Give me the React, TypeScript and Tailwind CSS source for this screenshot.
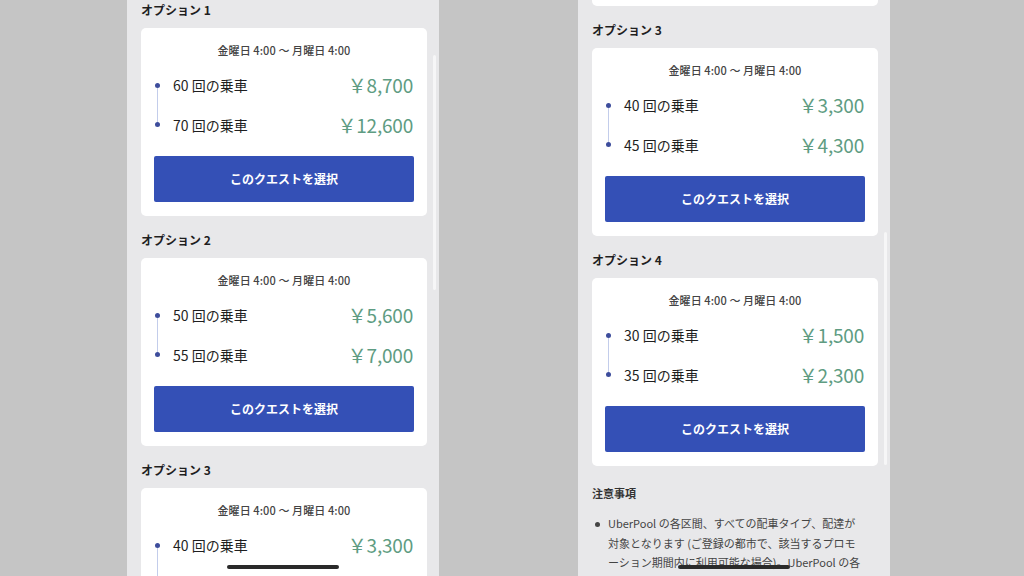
import React from 'react';

type Tier = { rides: number; price: string };
type Option = { label: string; tiers: Tier[] };

const leftOptions: Option[] = [
    { label: 'オプション 1', tiers: [{ rides: 60, price: '8,700' }, { rides: 70, price: '12,600' }] },
    { label: 'オプション 2', tiers: [{ rides: 50, price: '5,600' }, { rides: 55, price: '7,000' }] },
    { label: 'オプション 3', tiers: [{ rides: 40, price: '3,300' }, { rides: 45, price: '4,300' }] },
];

const rightOptions: Option[] = [
    { label: 'オプション 3', tiers: [{ rides: 40, price: '3,300' }, { rides: 45, price: '4,300' }] },
    { label: 'オプション 4', tiers: [{ rides: 30, price: '1,500' }, { rides: 35, price: '2,300' }] },
];

function QuestCard({ option }: { option: Option }) {
    return (
        <div className="pt-[14px]">
            <h3 className="h-[20px] leading-[20px] text-[12px] font-bold text-[#1f1f1f]">{option.label}</h3>
            <div className="mt-[8px] h-[188px] bg-white rounded-[5px] px-[13px] pt-[14px]">
                <p className="h-[16px] leading-[16px] text-center text-[11px] font-medium text-[#444] tracking-[0.1px]">金曜日 4:00 〜 月曜日 4:00</p>
                <div className="mt-[7px] flex">
                    <div className="w-[6px] h-[80px] flex flex-col items-center py-[18px]">
                        <div className="w-[5px] h-[5px] rounded-full bg-[#3d4d9c]" />
                        <div className="flex-1 w-px bg-[#c3cdeb]" />
                        <div className="w-[5px] h-[5px] rounded-full bg-[#3d4d9c]" />
                    </div>
                    <div className="flex-1 pl-[13px] pr-px">
                        {option.tiers.map((tier) => (
                            <div key={tier.rides} className="h-[40px] flex items-center justify-between">
                                <span className="text-[14px] text-[#1f1f1f]">{tier.rides} 回の乗車</span>
                                <span className="text-[19px] text-[#5e9c82] tracking-[-0.2px]">￥{tier.price}</span>
                            </div>
                        ))}
                    </div>
                </div>
                <button className="mt-[11px] w-full h-[46px] rounded-[2px] bg-[#3450b6] text-white text-[12px] font-bold">
                    このクエストを選択
                </button>
            </div>
        </div>
    );
}

function HomeBar() {
    return <div className="absolute bottom-[7px] left-1/2 -translate-x-1/2 w-[112px] h-[4px] rounded-full bg-[#2a2a2a]" />;
}

export default function App() {
    return (
        <div
            className="w-[1024px] h-[576px] overflow-hidden bg-[#c5c5c5] flex"
            style={{ fontFamily: '"Noto Sans CJK JP", "Noto Sans", sans-serif' }}
        >
            {/* left phone */}
            <div className="relative ml-[127px] w-[312px] h-full overflow-hidden bg-[#e8e8ea]">
                <div className="-mt-[14px] pl-[14px] pr-[12px]">
                    {leftOptions.map((o) => (
                        <QuestCard key={o.label} option={o} />
                    ))}
                </div>
                <div className="absolute right-[3px] top-[55px] h-[235px] w-[3px] rounded-full bg-white/60" />
                <HomeBar />
            </div>

            {/* right phone */}
            <div className="relative ml-[139px] w-[312px] h-full overflow-hidden bg-[#e8e8ea]">
                <div className="-mt-[1px] pl-[14px] pr-[12px]">
                    <div className="h-[7px] bg-white rounded-b-[5px]" />
                    {rightOptions.map((o) => (
                        <QuestCard key={o.label} option={o} />
                    ))}
                    <h4 className="mt-[17px] h-[20px] leading-[20px] text-[11px] font-bold text-[#333]">注意事項</h4>
                    <div className="mt-[11px] flex text-[11px] leading-[19.5px] text-[#444]">
                        <div className="w-[16px] pl-[3px] pt-[8px]">
                            <div className="w-[5px] h-[5px] rounded-full bg-[#444]" />
                        </div>
                        <div className="whitespace-nowrap">
                            <div>UberPool の各区間、すべての配車タイプ、配達が</div>
                            <div>対象となります (ご登録の都市で、該当するプロモ</div>
                            <div>ーション期間内に利用可能な場合)。UberPool の各</div>
                        </div>
                    </div>
                </div>
                <div className="absolute right-[3px] top-[232px] h-[233px] w-[3px] rounded-full bg-white/60" />
                <HomeBar />
            </div>
        </div>
    );
}
